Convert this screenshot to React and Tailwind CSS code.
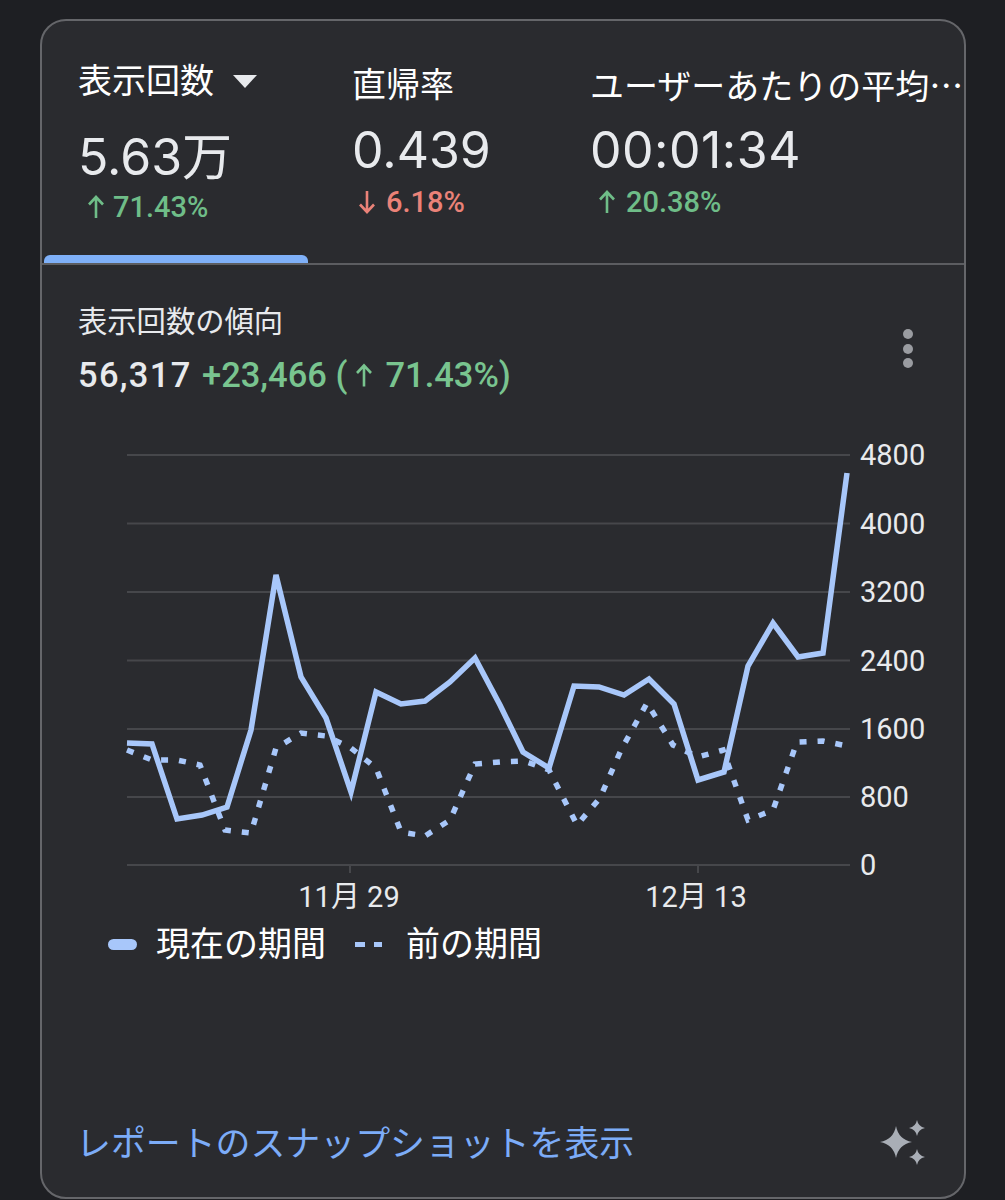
const current = [
  [127, 743], [152, 744], [177, 819], [202, 815], [227, 807], [251, 730], [276, 575], [301, 677],
  [326, 718], [351, 792], [376, 692], [401, 704], [425, 701], [450, 682], [475, 658], [500, 705],
  [523, 752], [549, 768], [574, 686], [599, 687], [624, 695], [649, 679], [674, 704], [698, 780],
  [724, 772], [748, 666], [773, 623], [798, 657], [823, 653], [847, 473],
];

const previous = [
  [127, 750], [152, 760], [177, 760], [200, 765], [225, 830], [251, 833], [276, 748], [301, 733],
  [326, 736], [351, 748], [376, 768], [401, 832], [425, 836], [450, 820], [475, 764], [500, 762],
  [524, 761], [549, 770], [577, 825], [600, 798], [621, 750], [647, 703], [673, 745], [698, 757],
  [723, 750], [748, 820], [773, 810], [797, 742], [823, 741], [847, 746],
];

const grid = [
  { y: 455, label: "4800" },
  { y: 523.5, label: "4000" },
  { y: 592, label: "3200" },
  { y: 660.5, label: "2400" },
  { y: 729, label: "1600" },
  { y: 797, label: "800" },
  { y: 865, label: "0" },
];

const toPoints = (list) => list.map((p) => p.join(",")).join(" ");

function Arrow({ down, className }) {
  return (
    <svg viewBox="0 0 18 24" className={className} fill="none" stroke="currentColor" strokeWidth="2.6">
      {down ? <path d="M9 1v21M2 14.5l7 7.5 7-7.5" /> : <path d="M9 23V2M2 9.5L9 2l7 7.5" />}
    </svg>
  );
}

function Delta({ value, down, gap = "gap-[10px]" }) {
  return (
    <div className={`flex items-center ${gap} text-[29px] leading-[32px] font-medium ${down ? "text-[#ea8278]" : "text-[#6fbd88]"}`}>
      <Arrow down={down} className="w-[18px] h-[24px]" />
      <span>{value}</span>
    </div>
  );
}

function Chart() {
  return (
    <svg viewBox="42 430 921 490" className="block w-[921px] h-[490px]">
      {grid.map((g) => (
        <g key={g.label}>
          <line x1="127" x2="850" y1={g.y} y2={g.y} stroke="#46474b" strokeWidth="2" />
          <text x="860" y={g.y + 10} fill="#e8eaed" fontSize="29" fontFamily="Roboto, sans-serif">
            {g.label}
          </text>
        </g>
      ))}
      <line x1="350" x2="350" y1="865" y2="873" stroke="#46474b" strokeWidth="2" />
      <line x1="698" x2="698" y1="865" y2="873" stroke="#46474b" strokeWidth="2" />
      <text x="349" y="907" textAnchor="middle" fill="#e8eaed" fontSize="29" fontFamily="Roboto, 'Noto Sans CJK JP', sans-serif">
        11月 29
      </text>
      <text x="696" y="907" textAnchor="middle" fill="#e8eaed" fontSize="29" fontFamily="Roboto, 'Noto Sans CJK JP', sans-serif">
        12月 13
      </text>
      <polyline points={toPoints(previous)} fill="none" stroke="#a8c7fa" strokeWidth="5.500" strokeDasharray="7 11" />
      <polyline points={toPoints(current)} fill="none" stroke="#a8c7fa" strokeWidth="5.500" strokeLinejoin="miter" />
    </svg>
  );
}

function Sparkles() {
  return (
    <svg viewBox="880 1120 46 46" className="w-[46px] h-[46px] mb-[3px]" fill="#a9aeb6">
      <path d="M896 1126Q898.5 1139.500 912 1142Q898.500 1144.500 896 1158Q893.500 1144.500 880 1142Q893.500 1139.500 896 1126Z" />
      <path d="M917 1120Q918.200 1126.500 925 1128Q918.200 1129.500 917 1136Q915.800 1129.500 909 1128Q915.800 1126.500 917 1120Z" />
      <path d="M917 1149Q918.200 1155.500 925 1157Q918.200 1158.500 917 1165Q915.800 1158.500 909 1157Q915.800 1155.500 917 1149Z" />
    </svg>
  );
}

export default function App() {
  return (
    <div className="w-[1005px] h-[1200px] bg-[#1e1f23] pt-[19px] pl-[40px] overflow-hidden font-['Roboto','Noto_Sans_CJK_JP',sans-serif] text-[#e8eaed]">
      <div className="w-[926px] h-[1180px] bg-[#2a2b2f] border-2 border-[#65666a] rounded-[26px] flex flex-col">
        {/* metric tabs */}
        <div className="flex h-[244px] border-b-2 border-[#5c5d61] shrink-0">
          <div className="relative w-[266px] pl-[36px] pt-[36px]">
            <div className="flex items-center gap-[19px] h-[48px]">
              <span className="text-[34px] text-white">表示回数</span>
              <span className="w-0 h-0 border-l-[12px] border-r-[12px] border-t-[13px] border-l-transparent border-r-transparent border-t-[#e8eaed]" />
            </div>
            <div className="text-[50px] leading-[60px] mt-[22px] font-['Inter','Noto_Sans_CJK_JP',sans-serif]">5.63万</div>
            <div className="mt-[4px] ml-[9px]">
              <Delta value="71.43%" gap="gap-[8px]" />
            </div>
            <div className="absolute left-[2px] right-0 bottom-0 h-[8px] bg-[#7fb0f8] rounded-t-[6px]" />
          </div>
          <div className="w-[238px] pl-[44px] pt-[40px]">
            <div className="text-[34px] text-white h-[48px] leading-[48px]">直帰率</div>
            <div className="text-[50px] leading-[60px] mt-[11px] font-['Inter',sans-serif]">0.439</div>
            <div className="mt-[6px] ml-[6px]">
              <Delta value="6.18%" down />
            </div>
          </div>
          <div className="flex-1 min-w-0 pl-[44px] pt-[40px] overflow-hidden">
            <div className="text-[34px] text-white h-[48px] leading-[48px] whitespace-nowrap font-['Noto_Sans_CJK_JP',sans-serif]">ユーザーあたりの平均…</div>
            <div className="text-[50px] leading-[60px] mt-[11px] tracking-[0.5px] font-['Inter',sans-serif]">00:01:34</div>
            <div className="mt-[6px] ml-[8px]">
              <Delta value="20.38%" />
            </div>
          </div>
        </div>

        {/* trend */}
        <div className="flex justify-between pl-[36px] pr-[51px] pt-[37px] shrink-0 h-[144px]">
          <div>
            <div className="text-[29.300px] leading-[40px] text-[#e8eaed]">表示回数の傾向</div>
            <div className="flex items-center text-[34.500px] leading-[40px] mt-[13px] font-medium whitespace-nowrap">
              <span className="text-[#e8eaed] w-[124px] tracking-[1.300px]">56,317</span>
              <span className="text-[#79c48f] flex items-center">
                <span>+23,466 (</span>
                <Arrow className="w-[18px] h-[25px] ml-[8px] mr-[12px]" />
                <span>71.43%)</span>
              </span>
            </div>
          </div>
          <div className="flex flex-col gap-[4.700px] pt-[27px]">
            <span className="w-[10px] h-[10px] rounded-full bg-[#9a9ca1]" />
            <span className="w-[10px] h-[10px] rounded-full bg-[#9a9ca1]" />
            <span className="w-[10px] h-[10px] rounded-full bg-[#9a9ca1]" />
          </div>
        </div>

        <div className="h-[490px] mt-[21px] shrink-0">
          <Chart />
        </div>

        {/* legend */}
        <div className="flex items-center h-[48px] pl-[66px] text-[34px] text-white shrink-0">
          <span className="w-[29px] h-[11px] rounded-full bg-[#a8c7fa]" />
          <span className="ml-[19px]">現在の期間</span>
          <span className="ml-[29px] w-[10px] h-[5px] bg-[#a8c7fa]" />
          <span className="ml-[9px] w-[8px] h-[5px] bg-[#a8c7fa]" />
          <span className="ml-[24px]">前の期間</span>
        </div>

        {/* footer */}
        <div className="flex-1 flex items-end justify-between pl-[34px] pr-[38px] pb-[28px]">
          <span className="text-[34.900px] leading-[48px] text-[#7cacf8]">レポートのスナップショットを表示</span>
          <Sparkles />
        </div>
      </div>
    </div>
  );
}
